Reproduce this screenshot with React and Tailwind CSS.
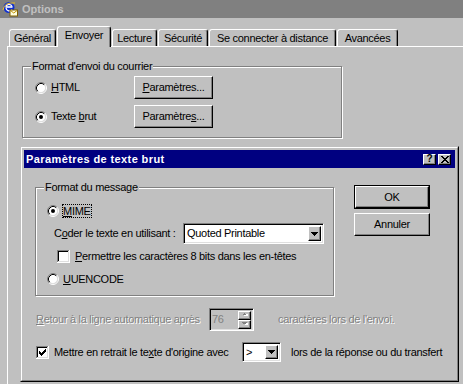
import React from "react";

const raised =
  "border border-t-white border-l-white border-r-black border-b-black shadow-[inset_-1px_-1px_#808080] bg-[#c0c0c0]";
const sunken =
  "border border-t-[#808080] border-l-[#808080] border-r-white border-b-white shadow-[inset_1px_1px_#000,inset_-1px_-1px_#dfdfdf]";
const etched = "border border-[#808080] shadow-[inset_1px_1px_#fff,1px_1px_#fff]";
const disabled = "text-[#808080] [text-shadow:1px_1px_0_#fff]";

function Radio({ checked }) {
  return (
    <svg width="12" height="12" viewBox="0 0 12 12" className="shrink-0">
      <circle cx="6" cy="6" r="4.5" fill="#fff" />
      <path d="M2.11 9.89 A5.5 5.5 0 0 1 9.89 2.11" stroke="#808080" fill="none" />
      <path d="M9.89 2.11 A5.5 5.5 0 0 1 2.11 9.89" stroke="#fff" fill="none" />
      <path d="M2.82 9.18 A4.5 4.5 0 0 1 9.18 2.82" stroke="#000" fill="none" />
      <path d="M9.18 2.82 A4.5 4.5 0 0 1 2.82 9.18" stroke="#dfdfdf" fill="none" />
      {checked && <circle cx="6" cy="6" r="2" fill="#000" />}
    </svg>
  );
}

function Check({ checked }) {
  const cols = [
    [3, 5],
    [4, 6],
    [5, 7],
    [6, 6],
    [7, 5],
    [8, 4],
    [9, 3],
  ];
  return (
    <svg width="13" height="13" viewBox="0 0 13 13" className="shrink-0" shapeRendering="crispEdges">
      <rect x="0" y="0" width="13" height="13" fill="#fff" />
      <rect x="0" y="0" width="12" height="1" fill="#808080" />
      <rect x="0" y="0" width="1" height="12" fill="#808080" />
      <rect x="0" y="12" width="13" height="1" fill="#fff" />
      <rect x="12" y="0" width="1" height="13" fill="#fff" />
      <rect x="1" y="1" width="10" height="1" fill="#000" />
      <rect x="1" y="1" width="1" height="10" fill="#000" />
      <rect x="1" y="11" width="11" height="1" fill="#dfdfdf" />
      <rect x="11" y="1" width="1" height="11" fill="#dfdfdf" />
      {checked &&
        cols.map(([x, y]) => <rect key={x} x={x} y={y} width="1" height="3" fill="#000" />)}
    </svg>
  );
}

function Arrow({ color = "#000" }) {
  return (
    <svg width="7" height="4" viewBox="0 0 7 4" shapeRendering="crispEdges">
      <rect x="0" y="0" width="7" height="1" fill={color} />
      <rect x="1" y="1" width="5" height="1" fill={color} />
      <rect x="2" y="2" width="3" height="1" fill={color} />
      <rect x="3" y="3" width="1" height="1" fill={color} />
    </svg>
  );
}

function SmallArrow({ up }) {
  return (
    <svg width="6" height="4" viewBox="0 0 6 4" shapeRendering="crispEdges">
      {up ? (
        <>
          <rect x="3" y="1" width="3" height="1" fill="#fff" />
          <rect x="2" y="2" width="5" height="1" fill="#fff" />
          <rect x="2" y="0" width="1" height="1" fill="#808080" />
          <rect x="1" y="1" width="3" height="1" fill="#808080" />
        </>
      ) : (
        <>
          <rect x="2" y="1" width="5" height="1" fill="#fff" />
          <rect x="3" y="2" width="3" height="1" fill="#fff" />
          <rect x="0" y="0" width="5" height="1" fill="#808080" />
          <rect x="1" y="1" width="3" height="1" fill="#808080" />
        </>
      )}
    </svg>
  );
}

function OEIcon() {
  return (
    <svg width="16" height="16" viewBox="0 0 16 16" className="shrink-0">
      <circle cx="7" cy="6.5" r="5.5" fill="#1030d0" />
      <path d="M3.5 6 H10.5" stroke="#fff" strokeWidth="1.6" />
      <path d="M4 5.5 A3.2 3.2 0 0 1 10 5.5" stroke="#fff" strokeWidth="1.3" fill="none" />
      <path d="M4 7 A3.3 3.3 0 0 0 10 8.5" stroke="#fff" strokeWidth="1.3" fill="none" />
      <path d="M1 9 Q 2 1 13 2" stroke="#f0c020" strokeWidth="1" fill="none" />
      <rect x="8" y="9" width="7.5" height="6" fill="#ffffe0" stroke="#806000" strokeWidth="1" />
      <path d="M8.5 9.5 L11.75 12 L15 9.5" stroke="#c09000" fill="none" />
    </svg>
  );
}

function CloseGlyph() {
  return (
    <svg width="8" height="7" viewBox="0 0 8 7" shapeRendering="crispEdges">
      {[0, 1, 2, 3, 4, 5, 6].map((i) => (
        <React.Fragment key={i}>
          <rect x={i} y={i} width="2" height="1" fill="#000" />
          <rect x={6 - i} y={i} width="2" height="1" fill="#000" />
        </React.Fragment>
      ))}
    </svg>
  );
}

function Tab({ w, active, children }) {
  return (
    <div
      className={`${w} ${
        active ? "h-[21px] -mb-px relative z-10 pb-[3px]" : "h-[17px]"
      } flex items-center justify-center bg-[#c0c0c0] border-t border-l border-r border-t-white border-l-white border-r-black rounded-tl-[3px] rounded-tr-[3px] shadow-[inset_-1px_0_#808080] whitespace-nowrap`}
    >
      {children}
    </div>
  );
}

function Legend({ children }) {
  return (
    <span className="absolute -top-[7px] left-[8px] px-[1px] bg-[#c0c0c0] leading-[13px] whitespace-nowrap">
      {children}
    </span>
  );
}

export default function App() {
  return (
    <div className="relative w-[463px] h-[384px] overflow-hidden bg-[#c0c0c0] font-['Liberation_Sans',Arial,sans-serif] text-[11px] leading-[13px] tracking-[-0.3px] text-black flex flex-col">
      {/* Options title bar */}
      <div className="h-[18px] shrink-0 bg-[#808080] flex items-center pl-[2px] gap-[4px]">
        <OEIcon />
        <span className="font-bold text-[#c0c0c0] tracking-normal">Options</span>
      </div>

      {/* Tabs */}
      <div className="mt-[8px] h-[20px] shrink-0 flex items-end gap-[1px] pl-[9px]">
        <Tab w="w-[47px]">Général</Tab>
        <Tab w="w-[54px]" active>
          Envoyer
        </Tab>
        <Tab w="w-[45px]">Lecture</Tab>
        <Tab w="w-[50px]">Sécurité</Tab>
        <Tab w="w-[127px]">Se connecter à distance</Tab>
        <Tab w="w-[61px]">Avancées</Tab>
      </div>

      {/* Panel */}
      <div className="ml-[7px] flex-1 border-t border-l border-white">
        <div className={`relative ml-[14px] mt-[19px] w-[320px] h-[72px] ${etched}`}>
          <Legend>Format d'envoi du courrier</Legend>
          <div className="pl-[12px] pt-[9px] flex flex-col gap-[6px]">
            <div className="flex items-center h-[23px]">
              <div className="w-[99px] flex items-center gap-[4px]">
                <Radio />
                <span>
                  <u>H</u>TML
                </span>
              </div>
              <div className={`w-[79px] h-[23px] flex items-center justify-center ${raised}`}>
                <span>
                  <u>P</u>aramètres...
                </span>
              </div>
            </div>
            <div className="flex items-center h-[23px]">
              <div className="w-[99px] flex items-center gap-[4px]">
                <Radio checked />
                <span>
                  Texte <u>b</u>rut
                </span>
              </div>
              <div className={`w-[79px] h-[23px] flex items-center justify-center ${raised}`}>
                <span>
                  Paramètre<u>s</u>...
                </span>
              </div>
            </div>
          </div>
        </div>
      </div>

      {/* Dialog */}
      <div className="absolute left-[20px] top-[146px] w-[439px] h-[236px] border border-t-[#c0c0c0] border-l-[#c0c0c0] border-r-black border-b-black bg-[#c0c0c0]">
        <div className="h-full border border-t-white border-l-white border-r-[#808080] border-b-[#808080] p-[2px] flex flex-col">
          {/* Title */}
          <div className="h-[18px] shrink-0 bg-[#000080] flex items-center justify-between pl-[2px] pr-[4px]">
            <span className="text-white font-bold tracking-[0.4px]">Paramètres de texte brut</span>
            <div className="flex gap-[2px]">
              <div className={`w-[13px] h-[11px] flex items-center justify-center ${raised}`}>
                <span className="font-bold text-[10px] leading-[10px] tracking-normal">?</span>
              </div>
              <div className={`w-[13px] h-[11px] flex items-center justify-center ${raised}`}>
                <CloseGlyph />
              </div>
            </div>
          </div>

          {/* Body */}
          <div className="flex">
            <div className={`relative ml-[11px] mt-[19px] w-[299px] h-[109px] ${etched}`}>
              <Legend>Format du message</Legend>
              <div className="flex flex-col">
                <div className="mt-[16px] ml-[11px] h-[14px] flex items-center gap-[3px]">
                  <Radio checked />
                  <span className="border border-dotted border-black px-[0px] leading-[12px]">
                    <u>M</u>IME
                  </span>
                </div>
                <div className="mt-[5px] ml-[18px] h-[21px] flex items-center">
                  <span className="w-[129px] whitespace-nowrap">
                    C<u>o</u>der le texte en utilisant :
                  </span>
                  <div className={`w-[141px] h-[21px] bg-white flex items-center justify-between pl-[3px] pr-[2px] ${sunken}`}>
                    <span>Quoted Printable</span>
                    <div className={`w-[13px] h-[15px] flex items-center justify-center ${raised}`}>
                      <Arrow />
                    </div>
                  </div>
                </div>
                <div className="mt-[6px] ml-[21px] h-[13px] flex items-center gap-[5px]">
                  <Check />
                  <span className="whitespace-nowrap">
                    <u>P</u>ermettre les caractères 8 bits dans les en-têtes
                  </span>
                </div>
                <div className="mt-[9px] ml-[11px] h-[14px] flex items-center gap-[4px]">
                  <Radio />
                  <span>
                    <u>U</u>UENCODE
                  </span>
                </div>
              </div>
            </div>

            <div className="ml-[20px] mt-[17px] flex flex-col">
              <div className="w-[76px] h-[24px] border border-black">
                <div className={`h-full flex items-center justify-center ${raised}`}>
                  <span>OK</span>
                </div>
              </div>
              <div className={`mt-[4px] w-[76px] h-[23px] flex items-center justify-center ${raised}`}>
                <span>Annuler</span>
              </div>
            </div>
          </div>

          <div className="mt-[12px] ml-[12px] h-[23px] flex items-center">
            <span className={`w-[173px] whitespace-nowrap ${disabled}`}>
              <u>R</u>etour à la ligne automatique après
            </span>
            <div className={`w-[45px] h-[23px] bg-[#c0c0c0] flex items-center justify-between pl-[2px] pr-[2px] ${sunken}`}>
              <span className="text-[#808080]">76</span>
              <div className="flex flex-col">
                <div className={`w-[13px] h-[9px] flex items-center justify-center ${raised}`}>
                  <SmallArrow up />
                </div>
                <div className={`w-[13px] h-[9px] flex items-center justify-center ${raised}`}>
                  <SmallArrow />
                </div>
              </div>
            </div>
            <span className={`ml-[24px] whitespace-nowrap ${disabled}`}>caractères lors de l'envoi.</span>
          </div>

          <div className="mt-[11px] ml-[12px] h-[20px] flex items-center">
            <Check checked />
            <span className="ml-[5px] w-[188px] whitespace-nowrap">
              Mettre en retrait le te<u>x</u>te d'origine avec
            </span>
            <div className={`w-[39px] h-[20px] bg-white flex items-center justify-between pl-[3px] pr-[2px] ${sunken}`}>
              <span>&gt;</span>
              <div className={`w-[13px] h-[14px] flex items-center justify-center ${raised}`}>
                <Arrow />
              </div>
            </div>
            <span className="ml-[10px] whitespace-nowrap">lors de la réponse ou du transfert</span>
          </div>
        </div>
      </div>
    </div>
  );
}
